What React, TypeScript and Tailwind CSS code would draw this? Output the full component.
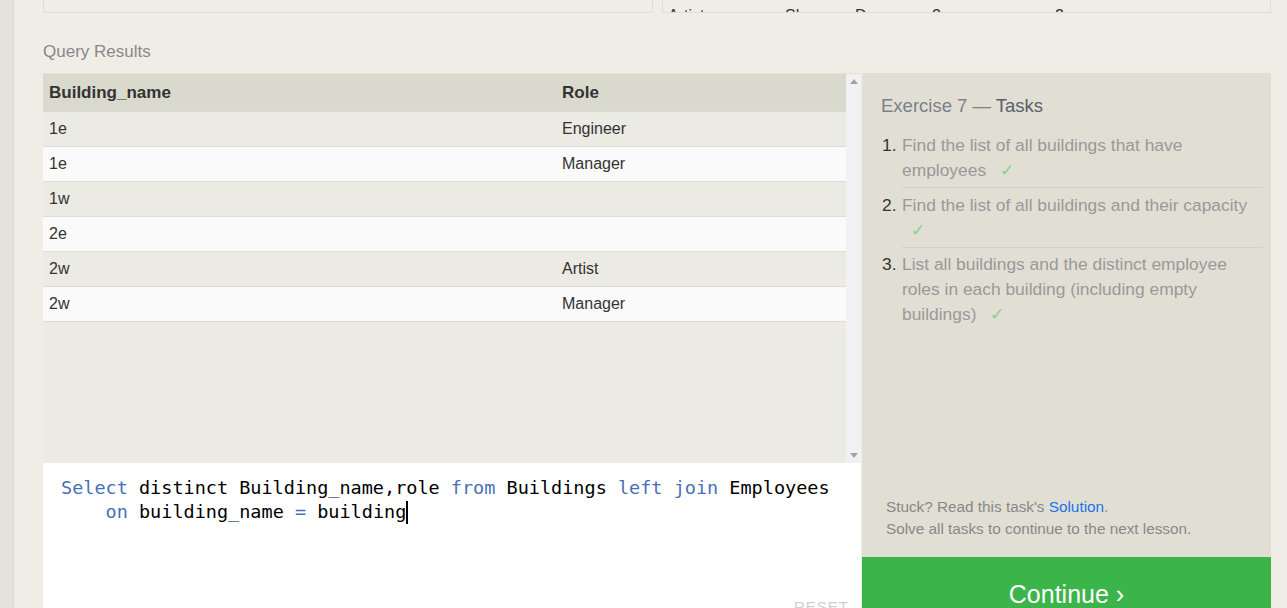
import React from "react";

const rows: [string, string][] = [
  ["1e", "Engineer"],
  ["1e", "Manager"],
  ["1w", ""],
  ["2e", ""],
  ["2w", "Artist"],
  ["2w", "Manager"],
];

function Check() {
  return <span className="inline-block ml-[9px] text-[#8dcf8d]">✓</span>;
}

export default function App() {
  const kw = "text-[#4a6fb8]";
  return (
    <div
      className="w-[1287px] h-[608px] overflow-hidden flex bg-[#f0ede6]"
      style={{ fontFamily: '"Liberation Sans", Arial, sans-serif' }}
    >
      <div className="w-[14px] shrink-0 bg-[#e5e2de] border-r border-[#dcd9d4]" />
      <div className="flex-1 pl-[29px] flex flex-col">
        {/* top clipped panels */}
        <div className="h-[13px] flex gap-[9px] shrink-0">
          <div className="w-[610px] h-[13px] border-x border-b border-[#e0ddd5] bg-[#f0ede6]" />
          <div className="w-[609px] h-[13px] border-x border-b border-[#e0ddd5] bg-[#f0ede6] overflow-hidden">
            <div className="flex pl-[5px] pt-[8px] text-[16px] leading-[16px] text-[#333]">
              <div className="w-[117px]">Artist</div>
              <div className="w-[70px]">Sharon</div>
              <div className="w-[77px]">D</div>
              <div className="w-[123px]">2</div>
              <div>2</div>
            </div>
          </div>
        </div>

        <div className="mt-[29px] text-[17px] leading-[20px] text-[#888]">Query Results</div>

        <div className="mt-[11px] flex">
          {/* left column */}
          <div className="w-[818px] flex flex-col">
            <div className="h-[390px] flex bg-[#ebeae3] border-t border-[#e2e0d8]">
              <div className="w-[803px]">
                <div className="h-[37px] flex items-center bg-[#d9d9cd] text-[17px] font-bold text-[#333]">
                  <div className="w-[513px] pl-[6px]">Building_name</div>
                  <div className="pl-[6px]">Role</div>
                </div>
                {rows.map(([b, r], i) => (
                  <div
                    key={i}
                    className={
                      i % 2 === 0
                        ? "h-[35px] flex items-center border-t border-[#dddcd5] bg-[#ebeae3] text-[16px] text-[#333]"
                        : "h-[35px] flex items-center border-t border-[#dddcd5] bg-[#fafafa] text-[16px] text-[#333]"
                    }
                  >
                    <div className="w-[513px] pl-[6px]">{b}</div>
                    <div className="pl-[6px]">{r}</div>
                  </div>
                ))}
                <div className="border-t border-[#dddcd5]" />
              </div>
              <div className="w-[15px] bg-[#f1f1f1] flex flex-col items-center justify-between py-[5px]">
                <svg width="8" height="5" viewBox="0 0 8 5">
                  <path d="M0 5 L4 0 L8 5 Z" fill="#a3a3a3" />
                </svg>
                <svg width="8" height="5" viewBox="0 0 8 5">
                  <path d="M0 0 L4 5 L8 0 Z" fill="#a3a3a3" />
                </svg>
              </div>
            </div>
            <div
              className="relative h-[160px] bg-white pt-[13px] pl-[18px] text-[18.5px] leading-[24px] text-black whitespace-pre"
              style={{ fontFamily: '"DejaVu Sans Mono", monospace' }}
            >
              <div>
                <span className={kw}>Select</span> distinct Building_name,role <span className={kw}>from</span> Buildings{" "}
                <span className={kw}>left</span> <span className={kw}>join</span> Employees
              </div>
              <div className="flex items-center">
                <span>
                  {"    "}
                  <span className={kw}>on</span> building_name <span className={kw}>=</span> building
                </span>
                <span className="inline-block w-[2px] h-[23px] bg-black" />
              </div>
              <div
                className="absolute top-[135px] right-[12px] text-[15px] leading-[18px] tracking-[1px] text-[#cfcfcf]"
                style={{ fontFamily: '"Liberation Sans", Arial, sans-serif' }}
              >
                RESET
              </div>
            </div>
          </div>

          {/* right panel */}
          <div className="ml-[1px] w-[409px] flex flex-col">
            <div className="h-[484px] bg-[#e1dfd4] flex flex-col pl-[19px] pr-[8px] pt-[22px]">
              <div className="text-[18.5px] leading-[22px] text-[#7b808a]">
                Exercise 7 — <span className="text-[#5a606b]">Tasks</span>
              </div>
              <ol className="mt-[11px] text-[17.4px] leading-[25px] text-[#999]">
                <li className="flex">
                  <span className="w-[21px] shrink-0 pl-[1px] pt-[5px] text-[#333]">1.</span>
                  <div className="flex-1 pt-[5px] pb-[4px] border-b border-[#d3d1c7]">
                    Find the list of all buildings that have employees <Check />
                  </div>
                </li>
                <li className="flex">
                  <span className="w-[21px] shrink-0 pl-[1px] pt-[5px] text-[#333]">2.</span>
                  <div className="flex-1 pt-[5px] pb-[4px] border-b border-[#d3d1c7]">
                    Find the list of all buildings and their capacity <Check />
                  </div>
                </li>
                <li className="flex">
                  <span className="w-[21px] shrink-0 pl-[1px] pt-[4px] text-[#333]">3.</span>
                  <div className="flex-1 pt-[4px] pb-[4px]">
                    List all buildings and the distinct employee roles in each building (including empty buildings){" "}
                    <Check />
                  </div>
                </li>
              </ol>
              <div className="mt-auto pl-[5px] pb-[17px] text-[15.3px] leading-[22px] text-[#888]">
                <div>
                  Stuck? Read this task's <span className="text-[#1a73e8]">Solution</span>.
                </div>
                <div>Solve all tasks to continue to the next lesson.</div>
              </div>
            </div>
            <div className="h-[60px] bg-[#3bb54a] text-center pt-[22px] text-[25px] leading-[30px] text-white">
              Continue ›
            </div>
          </div>
        </div>
      </div>
    </div>
  );
}
